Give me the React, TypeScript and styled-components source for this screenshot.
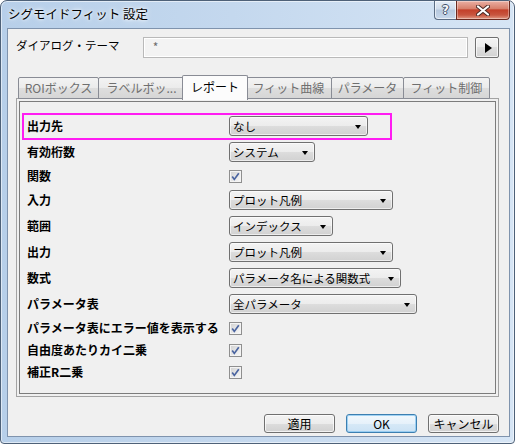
import React from 'react';
import styled, { createGlobalStyle } from 'styled-components';

type RowSpec =
  | { label: string; kind: 'select'; value: string; width: number; highlight?: boolean }
  | { label: string; kind: 'check' };

const rows: RowSpec[] = [
  { label: '出力先', kind: 'select', value: 'なし', width: 139, highlight: true },
  { label: '有効桁数', kind: 'select', value: 'システム', width: 86 },
  { label: '関数', kind: 'check' },
  { label: '入力', kind: 'select', value: 'プロット凡例', width: 164 },
  { label: '範囲', kind: 'select', value: 'インデックス', width: 104 },
  { label: '出力', kind: 'select', value: 'プロット凡例', width: 164 },
  { label: '数式', kind: 'select', value: 'パラメータ名による関数式', width: 172 },
  { label: 'パラメータ表', kind: 'select', value: '全パラメータ', width: 188 },
  { label: 'パラメータ表にエラー値を表示する', kind: 'check' },
  { label: '自由度あたりカイ二乗', kind: 'check' },
  { label: '補正R二乗', kind: 'check' },
];

const tabs = [
  { label: 'ROIボックス', width: 81 },
  { label: 'ラベルボッ...', width: 87 },
  { label: 'レポート', width: 62, active: true },
  { label: 'フィット曲線', width: 87 },
  { label: 'パラメータ', width: 73 },
  { label: 'フィット制御', width: 87 },
];

const CheckBox = () => (
  <CheckFrame>
    <svg width="13" height="13" viewBox="0 0 13 13">
      <rect x="0.5" y="0.5" width="12" height="12" fill="#f4f4f4" stroke="#8f8f8f" />
      <rect x="2" y="2" width="9" height="9" fill="url(#cbg)" />
      <defs>
        <linearGradient id="cbg" x1="0" y1="0" x2="1" y2="1">
          <stop offset="0" stopColor="#d4d4d4" />
          <stop offset="1" stopColor="#f6f6f6" />
        </linearGradient>
      </defs>
      <path d="M3.2 6.6 L5.3 9.4 L9.8 3.2" fill="none" stroke="#4a64a0" strokeWidth="1.7" />
    </svg>
  </CheckFrame>
);

const App: React.FC = () => {
  return (
    <>
      <GlobalStyle />
      <Window>
        <TitleBar>
          <Title>シグモイドフィット 設定</Title>
          <CaptionButtons>
            <HelpButton>?</HelpButton>
            <CloseButton>
              <svg width="14" height="11" viewBox="0 0 14 11">
                <path d="M2 1.5 L12 9.5 M12 1.5 L2 9.5" stroke="#4a2a26" strokeWidth="4" strokeLinecap="round" />
                <path d="M2 1.5 L12 9.5 M12 1.5 L2 9.5" stroke="#ffffff" strokeWidth="2.2" strokeLinecap="round" />
              </svg>
            </CloseButton>
          </CaptionButtons>
        </TitleBar>
        <Client>
          <ThemeRow>
            <ThemeLabel>ダイアログ・テーマ</ThemeLabel>
            <ThemeInput>*</ThemeInput>
            <ArrowButton>
              <RightTriangle />
            </ArrowButton>
          </ThemeRow>

          <TabStrip>
            {tabs.map((t) => (
              <Tab key={t.label} $active={!!t.active} $w={t.width}>
                {t.label}
              </Tab>
            ))}
          </TabStrip>

          <TabPanel>
            <InnerBox>
              {rows.map((r) => (
                <Row key={r.label} $tall={r.kind === 'select'} $highlight={r.kind === 'select' && !!r.highlight}>
                  <Label>{r.label}</Label>
                  {r.kind === 'select' ? (
                    <Select $w={r.width}>
                      <span>{r.value}</span>
                      <DownTriangle />
                    </Select>
                  ) : (
                    <CheckBox />
                  )}
                </Row>
              ))}
            </InnerBox>
          </TabPanel>

          <Footer>
            <PushButton>適用</PushButton>
            <PushButton $default>OK</PushButton>
            <PushButton>キャンセル</PushButton>
          </Footer>
        </Client>
      </Window>
    </>
  );
};

export default App;

const GlobalStyle = createGlobalStyle`
  html, body {
    margin: 0;
    padding: 0;
    background: #ffffff;
  }
  body {
    font-family: "Noto Sans CJK JP", "Noto Sans", sans-serif;
    color: #000000;
  }
`;

const Window = styled.div`
  box-sizing: border-box;
  width: 515px;
  height: 444px;
  display: flex;
  flex-direction: column;
  padding: 0 4px 6px 6px;
  border: 1px solid #4e6178;
  border-radius: 7px 7px 4px 4px;
  background: linear-gradient(to right, #b7cfe9 0%, #c4d8ee 45%, #d6e5f5 100%);
  box-shadow: inset 0 0 0 1px rgba(255, 255, 255, 0.55);
`;

const TitleBar = styled.div`
  height: 27px;
  display: flex;
  align-items: flex-start;
`;

const Title = styled.div`
  margin: 5px 0 0 1px;
  font-size: 12.5px;
  line-height: 16px;
  color: #000000;
  text-shadow: 0 0 6px #ffffff, 0 0 3px #ffffff;
`;

const CaptionButtons = styled.div`
  margin-left: auto;
  display: flex;
  height: 19px;
`;

const HelpButton = styled.div`
  box-sizing: border-box;
  width: 22px;
  height: 19px;
  display: flex;
  align-items: center;
  justify-content: center;
  border: 1px solid #5b6d84;
  border-top: none;
  border-right: none;
  border-radius: 0 0 0 4px;
  background: linear-gradient(#e4ecf6 0%, #cfdcec 45%, #b6c8de 50%, #c8d8eb 100%);
  box-shadow: inset 0 0 0 1px rgba(255, 255, 255, 0.6);
  font-family: "DejaVu Sans", sans-serif;
  font-weight: bold;
  font-size: 12px;
  color: #f6f8fb;
  text-shadow: 1px 0 0 #3f5068, -1px 0 0 #3f5068, 0 1px 0 #3f5068, 0 -1px 0 #3f5068;
`;

const CloseButton = styled.div`
  box-sizing: border-box;
  width: 54px;
  height: 19px;
  display: flex;
  align-items: center;
  justify-content: center;
  border: 1px solid #6b2a20;
  border-top: none;
  border-radius: 0 0 4px 0;
  background: linear-gradient(#eab0a4 0%, #d7806c 42%, #c3402a 50%, #c85640 78%, #e29a85 100%);
  box-shadow: inset 0 0 0 1px rgba(255, 255, 255, 0.35);
`;

const Client = styled.div`
  flex: 1;
  display: flex;
  flex-direction: column;
  padding: 8px 10px 0 8px;
  border: 1px solid #7f93ad;
  background: #f0f0f0;
`;

const ThemeRow = styled.div`
  display: flex;
  align-items: flex-start;
  height: 21px;
`;

const ThemeLabel = styled.div`
  width: 127px;
  font-size: 11.5px;
  line-height: 14px;
  margin-top: 1px;
`;

const ThemeInput = styled.div`
  box-sizing: border-box;
  width: 326px;
  height: 21px;
  padding: 2px 0 0 9px;
  border: 1px solid #b9b9b9;
  background: #f3f3f3;
  box-shadow: inset 0 0 0 1px #ffffff;
  font-size: 12px;
  line-height: 14px;
  color: #6d6d6d;
`;

const ArrowButton = styled.div`
  box-sizing: border-box;
  width: 24px;
  height: 21px;
  margin-left: 7px;
  display: flex;
  align-items: center;
  justify-content: center;
  border: 1px solid #707070;
  border-radius: 2px;
  background: linear-gradient(#f4f4f4 0%, #ececec 50%, #dfdfdf 50%, #d2d2d2 100%);
  box-shadow: inset 0 0 0 1px rgba(255, 255, 255, 0.7);
`;

const RightTriangle = styled.span`
  width: 0;
  height: 0;
  margin-left: 2px;
  border-top: 5px solid transparent;
  border-bottom: 5px solid transparent;
  border-left: 7px solid #000000;
`;

const TabStrip = styled.div`
  display: flex;
  align-items: flex-end;
  height: 24px;
  margin-top: 17px;
  padding-left: 2px;
  position: relative;
  z-index: 1;
`;

const Tab = styled.div<{ $active: boolean; $w: number }>`
  box-sizing: border-box;
  width: ${({ $w, $active }) => ($active ? $w + 4 : $w)}px;
  height: ${({ $active }) => ($active ? 25 : 22)}px;
  margin: ${({ $active }) => ($active ? '0 -2px -1px -3px' : '0 0 0 -1px')};
  display: flex;
  align-items: center;
  justify-content: center;
  border: 1px solid #898c95;
  border-bottom: ${({ $active }) => ($active ? 'none' : '1px solid #898c95')};
  border-radius: 2px 2px 0 0;
  background: ${({ $active }) =>
    $active ? '#fcfcfc' : 'linear-gradient(#f3f3f3 0%, #ebebeb 50%, #dedede 50%, #d6d6d6 100%)'};
  position: relative;
  z-index: ${({ $active }) => ($active ? 2 : 1)};
  font-size: 12px;
  line-height: 14px;
  white-space: nowrap;
  color: ${({ $active }) => ($active ? '#000000' : '#6f6f6f')};
  padding-bottom: ${({ $active }) => ($active ? '2px' : '0')};

  &:first-child {
    margin-left: 0;
  }
`;

const TabPanel = styled.div`
  box-sizing: border-box;
  height: 299px;
  margin-top: -1px;
  padding: 2px;
  border: 1px solid #a3a3a3;
  background: #f0f0f0;
  display: flex;
`;

const InnerBox = styled.div`
  flex: 1;
  display: flex;
  flex-direction: column;
  padding: 11px 0 0 7px;
  border: 1px solid #7c7c7c;
`;

const Row = styled.div<{ $tall: boolean; $highlight: boolean }>`
  position: relative;
  display: grid;
  grid-template-columns: 202px auto;
  align-items: center;
  justify-items: start;
  height: ${({ $tall }) => ($tall ? 26 : 22)}px;

  &::before {
    content: '';
    display: ${({ $highlight }) => ($highlight ? 'block' : 'none')};
    position: absolute;
    left: -5px;
    top: 0;
    width: 370px;
    height: 27px;
    box-sizing: border-box;
    border: 2px solid #ff1cf2;
    pointer-events: none;
  }
`;

const Label = styled.div`
  font-size: 12px;
  font-weight: bold;
  line-height: 14px;
  white-space: nowrap;
`;

const Select = styled.div<{ $w: number }>`
  box-sizing: border-box;
  width: ${({ $w }) => $w}px;
  height: 20px;
  display: flex;
  align-items: center;
  justify-content: space-between;
  padding: 0 6px 0 3px;
  border: 1px solid #707070;
  border-radius: 3px;
  background: linear-gradient(#f3f3f3 0%, #ececec 50%, #dddddd 50%, #d1d1d1 100%);
  box-shadow: inset 0 0 0 1px rgba(255, 255, 255, 0.6);
  font-size: 11.5px;
  line-height: 14px;
  white-space: nowrap;
`;

const DownTriangle = styled.span`
  width: 0;
  height: 0;
  margin-top: 1px;
  border-left: 3.5px solid transparent;
  border-right: 3.5px solid transparent;
  border-top: 4px solid #000000;
`;

const CheckFrame = styled.div`
  width: 13px;
  height: 13px;
  display: flex;

  svg {
    display: block;
  }
`;

const Footer = styled.div`
  display: flex;
  justify-content: flex-end;
  gap: 11px;
  margin-top: 17px;
`;

const PushButton = styled.div<{ $default?: boolean }>`
  box-sizing: border-box;
  width: 71px;
  height: 19px;
  display: flex;
  align-items: center;
  justify-content: center;
  border: 1px solid ${({ $default }) => ($default ? '#3c7fb1' : '#707070')};
  border-radius: 3px;
  background: ${({ $default }) =>
    $default
      ? 'linear-gradient(#f1f8fd 0%, #e6f1fa 50%, #d7e9f7 50%, #cbe2f4 100%)'
      : 'linear-gradient(#f3f3f3 0%, #ececec 50%, #dddddd 50%, #d1d1d1 100%)'};
  box-shadow: inset 0 0 0 1px ${({ $default }) => ($default ? 'rgba(140, 200, 240, 0.8)' : 'rgba(255, 255, 255, 0.7)')};
  font-size: 12px;
  line-height: 14px;
  color: #000000;
`;
